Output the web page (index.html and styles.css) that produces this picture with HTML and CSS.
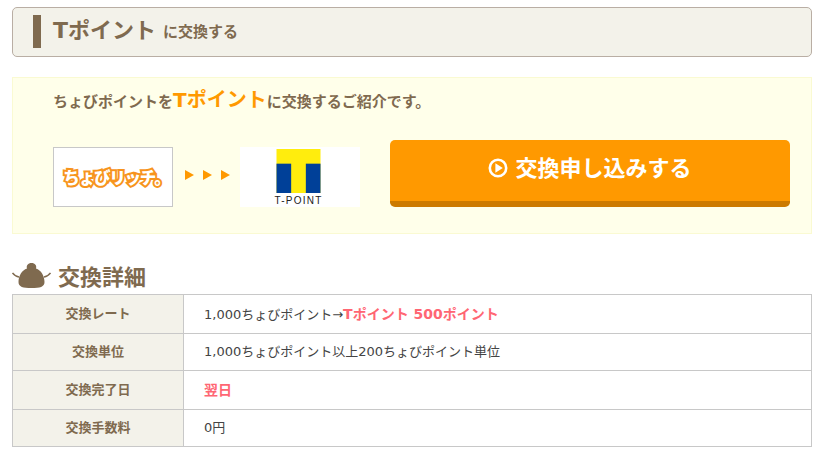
FILE: index.html
```html
<!DOCTYPE html>
<html lang="ja">
<head>
<meta charset="utf-8">
<title>Tポイントに交換する</title>
<link rel="stylesheet" href="styles.css">
</head>
<body>
<main class="page">
  <header class="title-box">
    <h1 class="title"><span class="title-main">Tポイント</span><span class="title-sub">に交換する</span></h1>
  </header>

  <section class="intro">
    <p class="lead">ちょびポイントを<span class="lead-em">Tポイント</span>に交換するご紹介です。</p>
    <div class="intro-row">
      <div class="logo-chobi"><span class="logo-chobi-text">ちょびリッチ。</span></div>
      <div class="arrows">
        <svg class="arrow" viewBox="0 0 9 10"><path d="M0 0L9 5L0 10Z"/></svg>
        <svg class="arrow" viewBox="0 0 9 10"><path d="M0 0L9 5L0 10Z"/></svg>
        <svg class="arrow" viewBox="0 0 9 10"><path d="M0 0L9 5L0 10Z"/></svg>
      </div>
      <div class="logo-t">
        <svg class="t-mark" viewBox="0 0 45 45">
          <rect width="45" height="45" fill="#ffed0d"/>
          <rect x="0" y="15" width="15" height="30" fill="#004098"/>
          <rect x="30" y="15" width="15" height="30" fill="#004098"/>
        </svg>
        <span class="t-label">T-POINT</span>
      </div>
      <a class="cta" href="#">
        <svg class="cta-icon" viewBox="0 0 20 20">
          <circle cx="10" cy="10" r="8.2" fill="none" stroke="#fff" stroke-width="2.6"/>
          <path d="M7.4 5.2L14.8 10L7.4 14.8Z" fill="#fff"/>
        </svg>
        <span class="cta-text">交換申し込みする</span>
      </a>
    </div>
  </section>

  <h2 class="section-head">
    <svg class="purse" viewBox="0 0 39 26">
      <path d="M0.5 10Q3 13.5 7 14M38.5 10Q36 13.5 32 14" stroke="#7f6a4f" stroke-width="1.5" fill="none"/>
      <path d="M15 5.5C14 2.5 16 0 19.5 0C23 0 25 2.5 24 5.5C29 7 32.5 13 32.5 19C32.5 24 28 25 19.5 25C11 25 6.5 24 6.5 19C6.5 13 10 7 15 5.5Z" fill="#7f6a4f"/>
    </svg>
    <span>交換詳細</span>
  </h2>

  <table class="details">
    <tr class="row-tall"><th>交換レート</th><td>1,000ちょびポイント→<strong class="hot">Tポイント 500ポイント</strong></td></tr>
    <tr class="row-short"><th>交換単位</th><td>1,000ちょびポイント以上200ちょびポイント単位</td></tr>
    <tr class="row-tall"><th>交換完了日</th><td><strong class="hot">翌日</strong></td></tr>
    <tr class="row-short"><th>交換手数料</th><td>0円</td></tr>
  </table>
</main>
</body>
</html>
```
FILE: styles.css
```css
* { box-sizing: border-box; }
html, body { margin: 0; padding: 0; background: #fff; }
body {
  font-family: "DejaVu Sans", "Noto Sans CJK JP", sans-serif;
  color: #444;
  overflow: hidden;
}
.page { width: 800px; margin-left: 12px; padding-top: 7px; }

.title-box {
  height: 50px;
  background: #f3f2ea;
  border: 1px solid #b9aea4;
  border-radius: 5px;
  padding: 7px 0 0 20px;
}
.title {
  margin: 0;
  height: 33px;
  border-left: 8px solid #7f6a4f;
  padding: 0 0 8px 12px;
  color: #7f6a4f;
  display: flex;
  align-items: center;
  font-weight: bold;
  white-space: nowrap;
}
.title-main { font-size: 22px; }
.title-sub { font-size: 15px; margin-left: 7px; position: relative; top: 3px; }

.intro {
  margin-top: 20px;
  height: 157px;
  background: #ffffea;
  border: 1px solid #fafad2;
  padding: 0 0 0 40px;
}
.lead {
  margin: 0;
  height: 69px;
  padding-top: 8px;
  color: #7f6a4f;
  font-size: 15px;
  font-weight: bold;
  line-height: 28px;
  white-space: nowrap;
}
.lead-em { font-size: 20px; color: #ff9900; }

.intro-row { display: flex; align-items: flex-start; height: 67px; margin-top: -7px; }
.logo-chobi {
  width: 120px;
  height: 60px;
  margin-top: 7px;
  background: #fff;
  border: 1px solid #c8c8c8;
  display: flex;
  align-items: center;
  justify-content: center;
  padding-left: 7px;
}
.logo-chobi-text {
  font-family: "Noto Sans CJK JP", sans-serif;
  font-size: 16.5px;
  font-weight: 900;
  letter-spacing: -1.2px;
  color: #fff;
  -webkit-text-stroke: 4px #f7941d;
  paint-order: stroke fill;
  white-space: nowrap;
}
.arrows {
  width: 67px;
  margin-top: 30px;
  padding-left: 12px;
  display: flex;
  gap: 9px;
}
.arrow { width: 9px; height: 10px; fill: #ff9900; display: block; }
.logo-t {
  width: 120px;
  height: 60px;
  margin-top: 7px;
  background: #fff;
  display: flex;
  flex-direction: column;
  align-items: center;
  padding: 2px 3px 0 0;
}
.t-mark { width: 45px; height: 45px; display: block; }
.t-label {
  font-family: "Liberation Sans", sans-serif;
  font-size: 10px;
  font-weight: normal;
  letter-spacing: 1.25px;
  line-height: 13px;
  margin-top: 1px;
  color: #222;
  white-space: nowrap;
}
.cta {
  width: 400px;
  height: 67px;
  margin-left: 30px;
  background: #ff9900;
  border-bottom: 6px solid #cc7a00;
  border-radius: 5px;
  display: flex;
  align-items: center;
  justify-content: center;
  gap: 7px;
  padding-bottom: 5px;
  color: #fff;
  font-size: 22px;
  font-weight: bold;
  text-decoration: none;
}
.cta-text { margin-bottom: 4px; }
.cta-icon { width: 20px; height: 20px; display: block; }

.section-head {
  margin: 26px 0 0;
  height: 34px;
  display: flex;
  align-items: flex-start;
  gap: 7px;
  color: #7f6a4f;
  font-size: 22px;
  line-height: 36px;
  font-weight: bold;
}
.purse { width: 39px; height: 26px; margin-top: 3px; display: block; flex: none; }

.details {
  width: 800px;
  table-layout: fixed;
  border-collapse: collapse;
  font-size: 13px;
  border: 1px solid #c8c8c8;
}
.details th, .details td {
  border: 1px solid #c8c8c8;
  padding: 0 0 3px 20px;
  font-weight: normal;
}
.row-tall th, .row-tall td { height: 39px; }
.row-short th, .row-short td { height: 37px; }
.details th {
  width: 171px;
  padding: 0 0 3px;
  background: #f3f2ea;
  color: #7f6a4f;
  font-weight: bold;
  font-size: 13px;
  text-align: center;
}
.details .hot { color: #ff6673; font-weight: bold; font-size: 14px; }
```
